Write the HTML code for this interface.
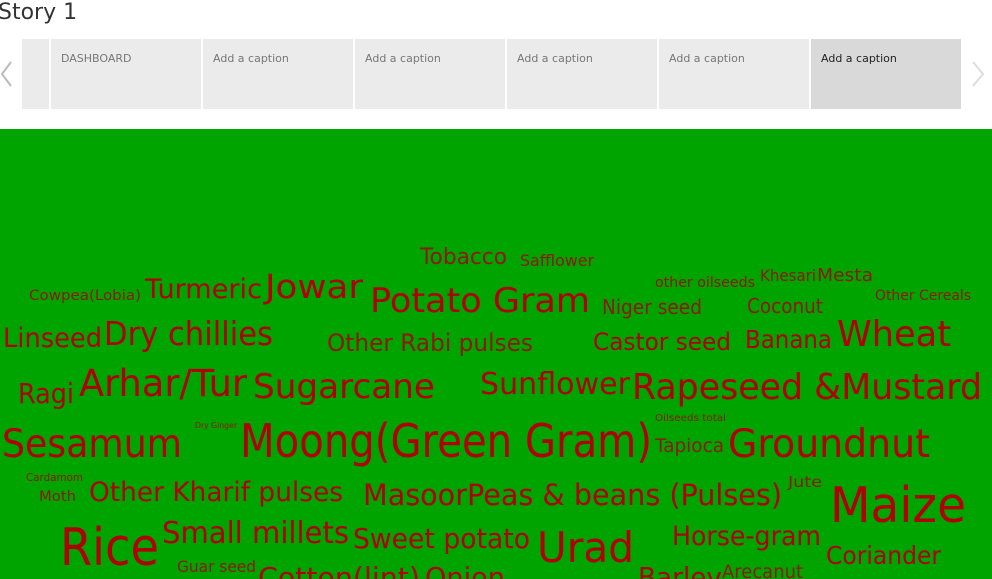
<!DOCTYPE html>
<html><head><meta charset="utf-8"><style>
body{margin:0;width:992px;height:579px;overflow:hidden;background:#fff;font-family:"DejaVu Sans","Liberation Sans",sans-serif;position:relative}
.t{position:absolute;left:-2px;top:0;font-size:22px;color:#333}
.tile{position:absolute;top:39px;height:70px;background:#ebebeb;font-size:11px;color:#777;box-sizing:border-box;padding:13px 0 0 10px}
.sel{background:#d9d9d9;color:#222}
.g{position:absolute;left:0;top:129px;width:992px;height:450px;background:#00a400}
</style></head><body>
<div class="t">Story 1</div>
<svg style="position:absolute;left:0;top:60px" width="14" height="28"><path d="M11 2 L2 14 L11 26" stroke="#bbb" stroke-width="2" fill="none"/></svg>
<svg style="position:absolute;left:970px;top:60px" width="16" height="28"><path d="M3 2 L13 14 L3 26" stroke="#ddd" stroke-width="2" fill="none"/></svg>
<div class="tile" style="left:22px;width:27px;padding:0"></div>
<div class="tile" style="left:51px;width:150px">DASHBOARD</div>
<div class="tile" style="left:203px;width:150px">Add a caption</div>
<div class="tile" style="left:355px;width:150px">Add a caption</div>
<div class="tile" style="left:507px;width:150px">Add a caption</div>
<div class="tile" style="left:659px;width:150px">Add a caption</div>
<div class="tile sel" style="left:811px;width:150px">Add a caption</div>
<div class="g"></div>
<svg style="position:absolute;left:0;top:0" width="992" height="579" font-family="DejaVu Sans, Liberation Sans, sans-serif" fill="#b00000">
<g fill="#8e1800" lengthAdjust="spacingAndGlyphs">
<text x="420" y="264" font-size="22" textLength="87" lengthAdjust="spacingAndGlyphs">Tobacco</text>
<text x="520" y="266" font-size="16" textLength="74" lengthAdjust="spacingAndGlyphs">Safflower</text>
<text x="655" y="287" font-size="14" textLength="100" lengthAdjust="spacingAndGlyphs">other oilseeds</text>
<text x="760" y="281" font-size="16" textLength="56" lengthAdjust="spacingAndGlyphs">Khesari</text>
<text x="817" y="281" font-size="18" textLength="56" lengthAdjust="spacingAndGlyphs">Mesta</text>
<text x="875" y="300" font-size="14" textLength="96" lengthAdjust="spacingAndGlyphs">Other Cereals</text>
<text x="29" y="300" font-size="14" textLength="112" lengthAdjust="spacingAndGlyphs">Cowpea(Lobia)</text>
<text x="602" y="314" font-size="20" textLength="100" lengthAdjust="spacingAndGlyphs">Niger seed</text>
<text x="747" y="313" font-size="20" textLength="76" lengthAdjust="spacingAndGlyphs">Coconut</text>
<text x="327" y="351" font-size="24" textLength="206" lengthAdjust="spacingAndGlyphs">Other Rabi pulses</text>
<text x="195" y="428" font-size="8" textLength="42" lengthAdjust="spacingAndGlyphs">Dry Ginger</text>
<text x="655" y="421" font-size="10" textLength="71" lengthAdjust="spacingAndGlyphs">Oilseeds total</text>
<text x="26" y="481" font-size="11" textLength="57" lengthAdjust="spacingAndGlyphs">Cardamom</text>
<text x="39" y="501" font-size="14" textLength="37" lengthAdjust="spacingAndGlyphs">Moth</text>
<text x="788" y="487" font-size="15" textLength="34" lengthAdjust="spacingAndGlyphs">Jute</text>
<text x="655" y="452" font-size="19" textLength="69" lengthAdjust="spacingAndGlyphs">Tapioca</text>
<text x="177" y="572" font-size="16" textLength="79" lengthAdjust="spacingAndGlyphs">Guar seed</text>
<text x="722" y="578" font-size="19" textLength="81" lengthAdjust="spacingAndGlyphs">Arecanut</text>
</g>
<text x="145" y="298" font-size="27" textLength="117" lengthAdjust="spacingAndGlyphs">Turmeric</text>
<text x="265" y="298" font-size="33" textLength="98" lengthAdjust="spacingAndGlyphs">Jowar</text>
<text x="370" y="312" font-size="34" textLength="220" lengthAdjust="spacingAndGlyphs">Potato Gram</text>
<text x="3" y="347" font-size="27" textLength="99" lengthAdjust="spacingAndGlyphs">Linseed</text>
<text x="104" y="345" font-size="33" textLength="169" lengthAdjust="spacingAndGlyphs">Dry chillies</text>
<text x="593" y="350" font-size="24" textLength="138" lengthAdjust="spacingAndGlyphs">Castor seed</text>
<text x="745" y="348" font-size="25" textLength="87" lengthAdjust="spacingAndGlyphs">Banana</text>
<text x="837" y="346" font-size="36" textLength="114" lengthAdjust="spacingAndGlyphs">Wheat</text>
<text x="18" y="403" font-size="28" textLength="56" lengthAdjust="spacingAndGlyphs">Ragi</text>
<text x="79" y="396" font-size="37" textLength="168" lengthAdjust="spacingAndGlyphs">Arhar/Tur</text>
<text x="253" y="398" font-size="34" textLength="182" lengthAdjust="spacingAndGlyphs">Sugarcane</text>
<text x="480" y="394" font-size="30" textLength="150" lengthAdjust="spacingAndGlyphs">Sunflower</text>
<text x="632" y="399" font-size="36" textLength="350" lengthAdjust="spacingAndGlyphs">Rapeseed &amp;Mustard</text>
<text x="2" y="457" font-size="39" textLength="180" lengthAdjust="spacingAndGlyphs">Sesamum</text>
<text x="240" y="457" font-size="46" textLength="412" lengthAdjust="spacingAndGlyphs">Moong(Green Gram)</text>
<text x="728" y="457" font-size="39" textLength="202" lengthAdjust="spacingAndGlyphs">Groundnut</text>
<text x="89" y="501" font-size="27" textLength="254" lengthAdjust="spacingAndGlyphs">Other Kharif pulses</text>
<text x="363" y="505" font-size="29" textLength="419" lengthAdjust="spacingAndGlyphs">MasoorPeas &amp; beans (Pulses)</text>
<text x="830" y="522" font-size="49" textLength="136" lengthAdjust="spacingAndGlyphs">Maize</text>
<text x="60" y="565" font-size="52" textLength="99" lengthAdjust="spacingAndGlyphs">Rice</text>
<text x="162" y="543" font-size="30" textLength="187" lengthAdjust="spacingAndGlyphs">Small millets</text>
<text x="353" y="548" font-size="28" textLength="177" lengthAdjust="spacingAndGlyphs">Sweet potato</text>
<text x="537" y="562" font-size="42" textLength="97" lengthAdjust="spacingAndGlyphs">Urad</text>
<text x="672" y="545" font-size="27" textLength="149" lengthAdjust="spacingAndGlyphs">Horse-gram</text>
<text x="826" y="564" font-size="25" textLength="115" lengthAdjust="spacingAndGlyphs">Coriander</text>
<text x="258" y="587" font-size="28" textLength="162" lengthAdjust="spacingAndGlyphs">Cotton(lint)</text>
<text x="425" y="587" font-size="28" textLength="80" lengthAdjust="spacingAndGlyphs">Onion</text>
<text x="638" y="587" font-size="28" textLength="84" lengthAdjust="spacingAndGlyphs">Barley</text>
</svg>
</body></html>
